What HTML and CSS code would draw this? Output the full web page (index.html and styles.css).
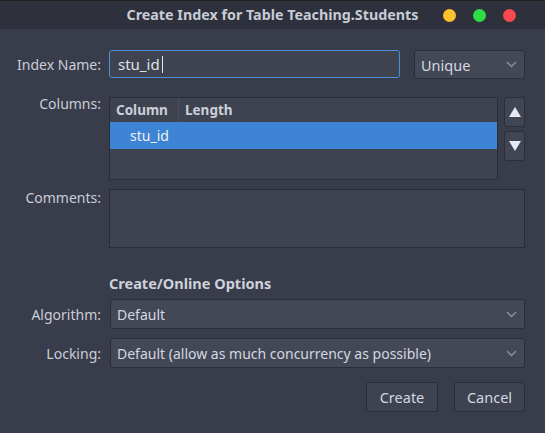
FILE: index.html
```html
<!DOCTYPE html>
<html>
<head>
<meta charset="utf-8">
<link rel="stylesheet" href="styles.css">
</head>
<body>
<div class="window">
  <div class="titlebar">
    <div class="tb-side"></div>
    <div class="title">Create Index for Table Teaching.Students</div>
    <div class="tb-side controls">
      <span class="dot yellow"></span>
      <span class="dot green"></span>
      <span class="dot red"></span>
    </div>
  </div>
  <div class="content">
    <div class="row row-name">
      <label class="label">Index Name:</label>
      <div class="field name-field">
        <div class="input focused"><span class="value">stu_id</span><span class="caret"></span></div>
        <div class="select unique"><span>Unique</span><svg class="chev" width="11" height="7" viewBox="0 0 11 7"><path d="M1 1 L5.5 5.5 L10 1" fill="none" stroke="#8d92a0" stroke-width="1.4"/></svg></div>
      </div>
    </div>
    <div class="row row-columns">
      <label class="label label-top">Columns:</label>
      <div class="field columns-field">
        <div class="table">
          <div class="thead">
            <div class="th th-col">Column</div>
            <div class="th th-len">Length</div>
          </div>
          <div class="tr selected"><span class="td">stu_id</span></div>
        </div>
        <div class="movers">
          <div class="mover"><svg width="14" height="12" viewBox="0 0 14 12"><path d="M7 1 L13 11 L1 11 Z" fill="#e6eaf0"/></svg></div>
          <div class="mover"><svg width="14" height="12" viewBox="0 0 14 12"><path d="M1 1 L13 1 L7 11 Z" fill="#e6eaf0"/></svg></div>
        </div>
      </div>
    </div>
    <div class="row row-comments">
      <label class="label label-top">Comments:</label>
      <div class="field"><div class="textarea"></div></div>
    </div>
    <div class="row row-heading">
      <div></div>
      <div class="heading">Create/Online Options</div>
    </div>
    <div class="row row-algo">
      <label class="label">Algorithm:</label>
      <div class="field"><div class="select wide"><span>Default</span><svg class="chev" width="11" height="7" viewBox="0 0 11 7"><path d="M1 1 L5.5 5.5 L10 1" fill="none" stroke="#8d92a0" stroke-width="1.4"/></svg></div></div>
    </div>
    <div class="row row-lock">
      <label class="label">Locking:</label>
      <div class="field"><div class="select wide"><span>Default (allow as much concurrency as possible)</span><svg class="chev" width="11" height="7" viewBox="0 0 11 7"><path d="M1 1 L5.5 5.5 L10 1" fill="none" stroke="#8d92a0" stroke-width="1.4"/></svg></div></div>
    </div>
    <div class="buttons">
      <div class="btn create">Create</div>
      <div class="btn cancel">Cancel</div>
    </div>
  </div>
</div>
</body>
</html>
```

FILE: styles.css
```css
* { box-sizing: border-box; }
html, body { margin: 0; padding: 0; }
body {
  width: 545px;
  height: 433px;
  background: #393c4a;
  font-family: "Noto Sans", "DejaVu Sans", sans-serif;
  font-size: 14px;
  color: #cdd2db;
  overflow: hidden;
}
.window { width: 545px; height: 433px; }
.titlebar {
  height: 29px;
  background: #2e303b;
  border-top: 1px solid #24201f;
  display: grid;
  grid-template-columns: 1fr auto 1fr;
  align-items: center;
}
.title {
  font-weight: bold;
  font-size: 14.3px;
  color: #c6ccd6;
  margin-top: -1px;
}
.controls {
  display: flex;
  justify-content: flex-end;
  gap: 17px;
  padding-right: 29px;
}
.dot { width: 13px; height: 13px; border-radius: 50%; display: block; }
.yellow { background: #fdc12e; }
.green { background: #2fdc47; }
.red { background: #f6494f; }

.content { padding: 21px 20px 0 7px; }
.row {
  display: grid;
  grid-template-columns: 94px 1fr;
  column-gap: 8px;
}
.label {
  text-align: right;
  align-self: center;
  white-space: nowrap;
  color: #c9ced8;
}
.label-top { align-self: start; }
.field { display: flex; }

.row-name { height: 29px; }
.name-field { gap: 14px; align-items: stretch; }
.input {
  width: 291px;
  height: 28px;
  background: #3f4350;
  border: 1px solid #4a8fdd;
  border-radius: 3px;
  display: flex;
  align-items: center;
  padding-left: 8px;
  font-size: 15px;
  color: #dfe4eb;
}
.caret { width: 1px; height: 17px; background: #dfe4eb; margin-left: 2px; }
.select {
  background: #444856;
  border: 1px solid #2c2e38;
  border-radius: 3px;
  display: flex;
  align-items: center;
  justify-content: space-between;
  padding: 0 7px 0 6px;
  color: #d3d8e0;
}
.unique { width: 111px; height: 29px; font-size: 14.5px; }
.wide { width: 100%; height: 30px; }
.chev { display: block; }

.row-columns { margin-top: 18px; height: 83px; }
.row-columns .label { margin-top: -3px; }
.columns-field { gap: 6px; }
.table {
  width: 389px;
  height: 83px;
  background: #3f4350;
  border: 1px solid #2a2c36;
}
.thead { display: flex; height: 24px; align-items: center; }
.th { font-weight: bold; font-size: 13.5px; color: #cbd0d9; padding-left: 6px; height: 24px; line-height: 24px; }
.th-col { width: 69px; border-right: 1px solid #4b4f5c; }
.th-len { padding-left: 6px; }
.tr { height: 27px; display: flex; align-items: center; }
.selected { background: #3d84d4; }
.td { padding-left: 20px; font-size: 14px; color: #eef2f7; }
.movers { display: flex; flex-direction: column; gap: 4px; }
.mover {
  width: 21px;
  height: 30px;
  background: #424654;
  border: 1px solid #2c2e38;
  border-radius: 3px;
  display: flex;
  align-items: center;
  justify-content: center;
}

.row-comments { margin-top: 9px; height: 59px; }
.row-comments .label { margin-top: -1px; }
.textarea {
  width: 100%;
  margin-right: -2px;
  height: 59px;
  background: #3f4350;
  border: 1px solid #2a2c36;
}
.row-heading { margin-top: 26px; height: 18px; }
.heading { font-weight: bold; font-size: 14.5px; color: #cdd2db; line-height: 18px; }
.row-algo { margin-top: 7px; height: 30px; }
.row-algo .field, .row-lock .field { margin-left: 1px; }
.row-lock { margin-top: 9px; height: 30px; }
.buttons {
  margin-top: 14px;
  display: flex;
  justify-content: flex-end;
  gap: 16px;
}
.btn {
  height: 30px;
  background: #3f4351;
  border: 1px solid #2a2c36;
  border-radius: 3px;
  display: flex;
  align-items: center;
  justify-content: center;
  font-size: 14.5px;
  color: #d3d8e0;
}
.create { width: 72px; }
.cancel { width: 71px; }
```
